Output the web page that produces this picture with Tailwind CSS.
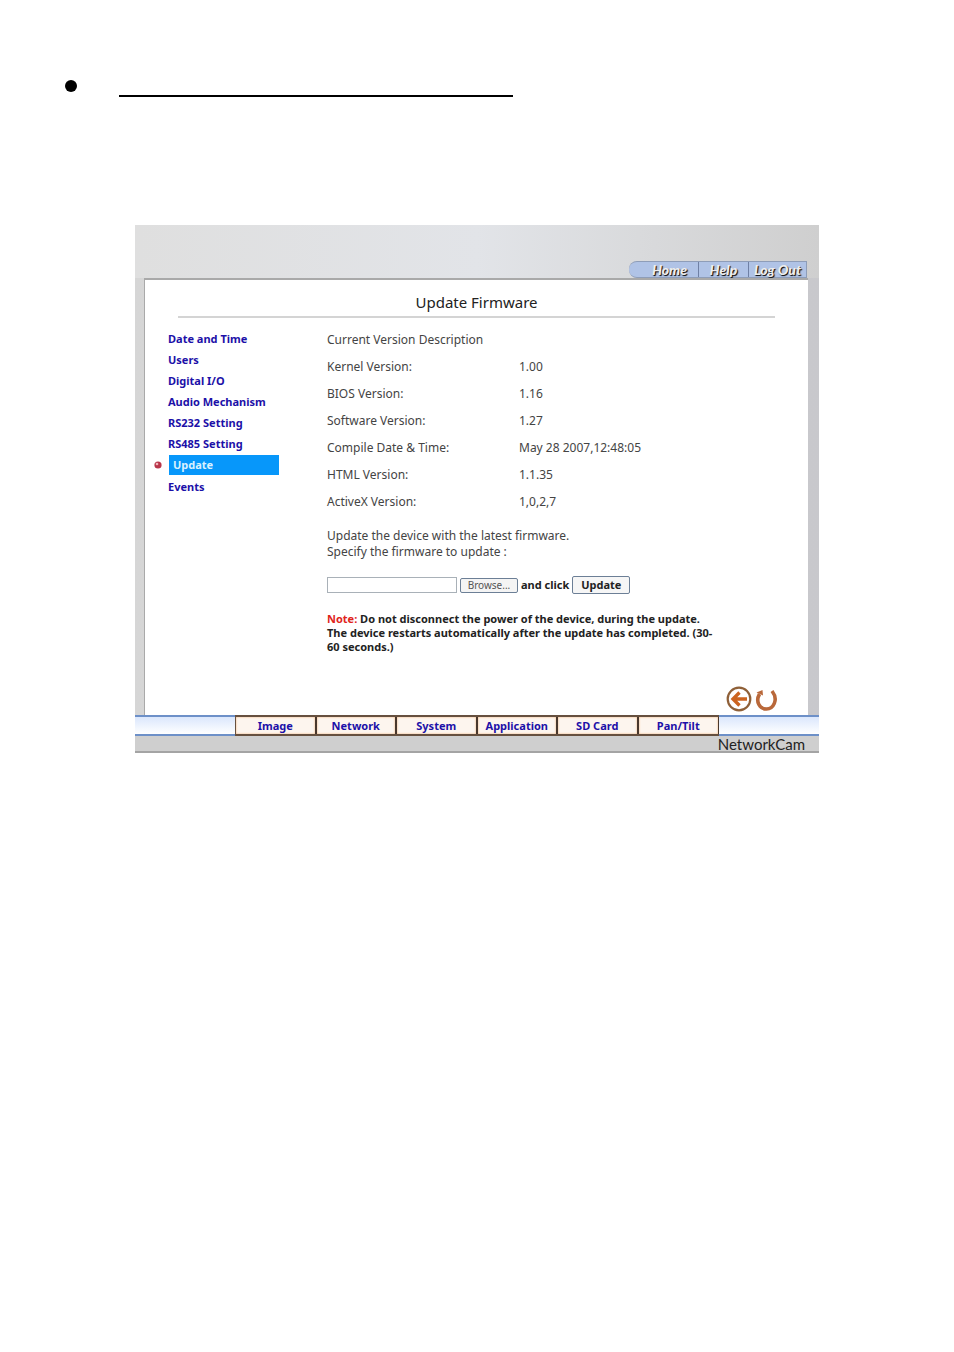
<!DOCTYPE html>
<html lang="en">
<head>
    <meta charset="UTF-8">
    <meta name="viewport" content="width=device-width, initial-scale=1.0">
    <title>Update Firmware - NetworkCam</title>
    <script src="https://cdn.jsdelivr.net/npm/@tailwindcss/browser@4"></script>
</head>
<body class="bg-white font-['Noto_Sans','Open_Sans',sans-serif] text-xs text-[#444]">
    <!-- Bullet heading -->
    <div class="flex items-start gap-[42px] pt-20 pl-[65px]">
        <span class="size-3 rounded-full bg-black"></span>
        <span class="h-[17px] w-[394px] border-b-2 border-black"></span>
    </div>

    <div class="mx-[135px] mt-32 flex flex-col bg-[#d2d2d2]">
        <!-- Top bar -->
        <header class="flex h-[53px] items-end justify-end bg-linear-to-r from-[#dfdfdf] via-[#e2e4e8] to-[#cfcfcf] pr-3">
            <nav class="flex h-[17px] items-center rounded-l-lg border-t border-r border-b border-[#8e9db8] bg-[#b0c3e6] pl-3 font-['Lato',sans-serif] text-sm font-black text-[#eee] italic text-shadow-[1px_1px_1px_#000]">
                <a href="#" class="w-[57px] text-center leading-[15px]">Home</a>
                <a href="#" class="w-[50px] border-l border-[#6f80a4] text-center leading-[15px]">Help</a>
                <a href="#" class="w-[58px] border-l border-[#6f80a4] text-center leading-[15px] whitespace-nowrap">Log Out</a>
            </nav>
        </header>

        <div class="bg-linear-to-r from-[#d6d6d6] to-[#c8c8cc] pr-[11px] pl-[9px]">
            <main class="flex h-[437px] flex-col border-t-2 border-l border-[#a9a9a9] bg-white">
                <h1 class="mx-[33px] h-[38px] border-b-2 border-[#d4d4d4] pt-[10px] text-center text-[15px] leading-6 text-[#222]">Update Firmware</h1>

                <div class="flex flex-1">
                    <ul class="w-[182px] shrink-0 pt-[10px] pl-[23px] text-[11px] leading-[21px] font-bold text-[#1c10a8]">
                        <li><a href="#">Date and Time</a></li>
                        <li><a href="#">Users</a></li>
                        <li><a href="#">Digital I/O</a></li>
                        <li><a href="#">Audio Mechanism</a></li>
                        <li><a href="#">RS232 Setting</a></li>
                        <li><a href="#">RS485 Setting</a></li>
                        <li class="-ml-[14px] flex items-center gap-[7px]">
                            <svg class="size-2" viewBox="0 0 8 8"><circle cx="4" cy="4" r="3.6" fill="#b8364a"/><circle cx="3" cy="3" r="1.3" fill="#f0b4ba"/></svg>
                            <a href="#" class="my-px w-[110px] bg-[#0797fa] pl-1 leading-5 text-[#d9f1ff]">Update</a>
                        </li>
                        <li><a href="#">Events</a></li>
                    </ul>

                    <section class="flex flex-1 flex-col pt-2">
                        <table class="w-[340px] text-left">
                            <thead>
                                <tr class="h-[27px]"><th colspan="2" class="font-normal">Current Version Description</th></tr>
                            </thead>
                            <tbody>
                                <tr class="h-[27px]"><th class="w-[192px] font-normal">Kernel Version:</th><td>1.00</td></tr>
                                <tr class="h-[27px]"><th class="font-normal">BIOS Version:</th><td>1.16</td></tr>
                                <tr class="h-[27px]"><th class="font-normal">Software Version:</th><td>1.27</td></tr>
                                <tr class="h-[27px]"><th class="font-normal">Compile Date &amp; Time:</th><td>May 28 2007,12:48:05</td></tr>
                                <tr class="h-[27px]"><th class="font-normal">HTML Version:</th><td>1.1.35</td></tr>
                                <tr class="h-[27px]"><th class="font-normal">ActiveX Version:</th><td>1,0,2,7</td></tr>
                            </tbody>
                        </table>

                        <label for="firmware" class="mt-[13px] leading-4">Update the device with the latest firmware.<br>Specify the firmware to update :</label>

                        <form class="mt-4 flex items-center text-[11px] font-bold text-[#222]">
                            <input type="text" id="firmware" class="h-4 w-[130px] border border-[#a9b1b8] bg-white px-1 font-normal">
                            <button type="button" class="ml-[3px] h-[15px] w-[58px] rounded-xs border border-[#6c7f96] bg-[#f4f4f4] text-[10px] leading-3 font-normal text-[#555]">Browse...</button>
                            <span class="mx-[3px] whitespace-nowrap">and click</span>
                            <button type="submit" class="h-[18px] w-[58px] rounded-xs border border-[#6c7f96] bg-[#f6f6f6] leading-4">Update</button>
                        </form>

                        <p class="mt-[18px] w-[390px] text-[11px] leading-[14px] font-bold text-[#222]"><span class="text-[#e0241c]">Note:</span> Do not disconnect the power of the device, during the update. The device restarts automatically after the update has completed. (30-60 seconds.)</p>

                        <div class="mt-auto mr-[29px] mb-[3px] flex justify-end gap-[3px]">
                            <a href="#" aria-label="Back">
                                <svg class="size-[26px]" viewBox="0 0 26 26" fill="none">
                                    <circle cx="13" cy="13" r="11.3" stroke="#8f6038" stroke-width="2.2"/>
                                    <path d="M21 13H7M13.5 6.5L7 13l6.5 6.5" stroke="#cc6420" stroke-width="3.4"/>
                                </svg>
                            </a>
                            <a href="#" aria-label="Reload">
                                <svg class="w-6 h-[26px]" viewBox="0 0 24 26" fill="none">
                                    <path d="M4.500 8C0 16 5 23 11.500 23S24 14 17 5" stroke="#b9683a" stroke-width="3.600"/>
                                    <path d="M1.500 6.500L7.500 4L8 9.500Z" fill="#b9683a"/>
                                </svg>
                            </a>
                        </div>
                    </section>
                </div>
            </main>
        </div>

        <!-- Section tabs -->
        <nav class="flex h-[21px] justify-center border-t-2 border-b-2 border-[#6d90c8] bg-linear-to-b from-[#dbe7fc] to-white text-[11px] font-bold text-[#1c10a8]">
            <div class="-my-[2px] grid w-[484px] grid-cols-6 border-t-2 border-b-2 border-l border-[#66503f] text-center leading-[17px]">
                <a href="#" class="border-r-2 border-[#4a382c] bg-[#fdf5ee] inset-shadow-[0_0_2px_#f0a868]">Image</a>
                <a href="#" class="border-r-2 border-[#4a382c] bg-[#fdf5ee] inset-shadow-[0_0_2px_#f0a868]">Network</a>
                <a href="#" class="border-r-2 border-[#4a382c] bg-[#fdf5ee] inset-shadow-[0_0_2px_#f0a868]">System</a>
                <a href="#" class="border-r-2 border-[#4a382c] bg-[#fdf5ee] inset-shadow-[0_0_2px_#f0a868]">Application</a>
                <a href="#" class="border-r-2 border-[#4a382c] bg-[#fdf5ee] inset-shadow-[0_0_2px_#f0a868]">SD Card</a>
                <a href="#" class="border-r border-[#4a382c] bg-[#fdf5ee] inset-shadow-[0_0_2px_#f0a868]">Pan/Tilt</a>
            </div>
        </nav>
        <footer class="h-[17px] border-b-2 border-[#a4a4a4] bg-[#cfcfcf] pr-[14px] text-right font-['Lato',sans-serif] text-[15px] leading-4 text-[#222]">NetworkCam</footer>
    </div>
</body>
</html>
